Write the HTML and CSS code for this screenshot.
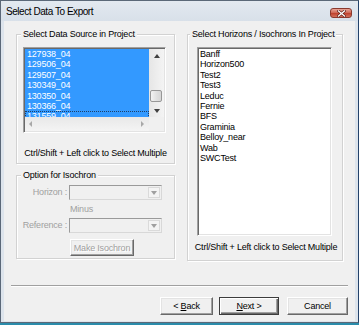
FILE: index.html
```html
<!DOCTYPE html>
<html lang="en">
<head>
<meta charset="UTF-8" />
<title>Select Data To Export</title>
<link rel="stylesheet" href="styles.css">
</head>
<body>
<div class="window">
  <!-- заголовок окна -->
  <div class="titlebar">
    <span class="caption">Select Data To Export</span>
    <span class="close" title="Close">
      <svg width="9" height="7" viewBox="0 0 9 7">
        <path d="M1.5 1 L7.5 6 M7.5 1 L1.5 6" stroke="#5a1d14" stroke-width="2.6" stroke-linecap="square"/>
        <path d="M1.5 1 L7.5 6 M7.5 1 L1.5 6" stroke="#fff" stroke-width="1.4" stroke-linecap="square"/>
      </svg>
    </span>
  </div>

  <div class="client">
    <div class="panes">
      <div class="left-col">
        <!-- источник данных -->
        <div class="group group-source">
          <div class="group-title">Select Data Source in Project</div>
          <div class="listbox listbox-source">
            <div class="items">
              <div class="item sel">127938_04</div>
              <div class="item sel">129506_04</div>
              <div class="item sel">129507_04</div>
              <div class="item sel">130349_04</div>
              <div class="item sel">130350_04</div>
              <div class="item sel">130366_04</div>
              <div class="item sel focus">131559_04</div>
            </div>
            <div class="vscroll">
              <div class="sb-btn sb-up"><span class="tri tri-up"></span></div>
              <div class="sb-track"><div class="thumb"></div></div>
              <div class="sb-btn sb-down"><span class="tri tri-down"></span></div>
            </div>
            <div class="hscroll"><span class="tri tri-left"></span><span class="tri tri-right"></span></div>
            <div class="corner"></div>
          </div>
          <div class="hint hint-source">Ctrl/Shift + Left click to Select Multiple</div>
        </div>

        <!-- изохрона -->
        <div class="group group-iso">
          <div class="group-title">Option for Isochron</div>
          <div class="iso-grid">
            <div class="lbl">Horizon :</div>
            <div class="combo"><span class="drop"><span class="tri tri-down"></span></span></div>
            <div></div>
            <div class="minus">Minus</div>
            <div class="lbl">Reference :</div>
            <div class="combo"><span class="drop"><span class="tri tri-down"></span></span></div>
            <div></div>
            <button class="btn btn-iso" disabled>Make Isochron</button>
          </div>
        </div>
      </div>

      <!-- горизонты -->
      <div class="group group-horizons">
        <div class="group-title">Select Horizons / Isochrons In Project</div>
        <div class="listbox listbox-horizons">
          <div class="item">Banff</div>
          <div class="item">Horizon500</div>
          <div class="item">Test2</div>
          <div class="item">Test3</div>
          <div class="item">Leduc</div>
          <div class="item">Fernie</div>
          <div class="item">BFS</div>
          <div class="item">Graminia</div>
          <div class="item">Belloy_near</div>
          <div class="item">Wab</div>
          <div class="item">SWCTest</div>
        </div>
        <div class="hint hint-horizons">Ctrl/Shift + Left click to Select Multiple</div>
      </div>
    </div>

    <div class="separator"></div>

    <div class="buttons">
      <button class="btn btn-back">&lt; <u>B</u>ack</button>
      <button class="btn btn-next btn-default"><u>N</u>ext &gt;</button>
      <button class="btn btn-cancel">Cancel</button>
    </div>
  </div>
</div>
</body>
</html>
```

FILE: styles.css
```css
/* окно диалога */
html, body {
  margin: 0;
  padding: 0;
}
body {
  width: 359px;
  height: 325px;
  overflow: hidden;
  background: #2a8cab;
  font-family: "Liberation Sans", Arial, sans-serif;
  font-size: 9px;
  letter-spacing: -0.2px;
  color: #000;
}
.window {
  width: 359px;
  height: 323px;
  box-sizing: border-box;
  background: #dde4ec;
  border: 1px solid #5b6878;
  border-right-color: #24436b;
  display: flex;
  flex-direction: column;
}
.titlebar {
  height: 20px;
  flex-shrink: 0;
  display: flex;
  align-items: flex-start;
  padding-left: 5px;
  background: linear-gradient(#e3e9f0, #d8e0e9);
}
.caption {
  font-size: 10px;
  letter-spacing: -0.45px;
  line-height: 10px;
  margin-top: 6px;
}
.close {
  margin-left: auto;
  margin-right: 6px;
  margin-top: 7px;
  width: 22px;
  height: 10px;
  box-sizing: border-box;
  border: 1px solid #8a3a2e;
  border-radius: 3px;
  background: linear-gradient(#e9a598, #d06a58 45%, #c0432f 55%, #d2705c);
  display: flex;
  align-items: center;
  justify-content: center;
}
.close svg { display: block; }

.client {
  flex: 1;
  margin: 0 3px 1px 3px;
  background: #f0f0f0;
  display: flex;
  flex-direction: column;
  padding: 13px 7px 0 7px;
}
.panes {
  display: flex;
  gap: 12px;
  margin: 0 5px;
  align-items: flex-start;
}
.left-col {
  width: 159px;
  display: flex;
  flex-direction: column;
  gap: 11px;
}

/* групповые рамки */
.group {
  box-sizing: border-box;
  border: 1px solid #d2d2d2;
  box-shadow: inset 1px 1px 0 #fff, 1px 1px 0 #fff;
}
.group-title {
  display: table;
  margin: -6px 0 0 -2px;
  padding: 0 2px;
  line-height: 11px;
  background: #f0f0f0;
  white-space: nowrap;
}
.group-source {
  height: 130px;
  padding: 0 7px 0 6px;
}
.group-iso {
  height: 84px;
  padding: 0 11px 0 4px;
}
.group-iso .group-title { margin-left: 0; }
.group-horizons {
  width: 156px;
  height: 227px;
  padding: 0 9px;
}
.group-horizons .group-title { margin-left: -7px; }
.hint {
  line-height: 11px;
  text-align: center;
  white-space: nowrap;
}
.hint-source { margin: 15px -6px 0 -5px; }
.hint-horizons { margin: 6px -8px 0 -6px; }

/* списки */
.listbox {
  box-sizing: border-box;
  border: 1px solid;
  border-color: #a0a0a0 #fff #fff #a0a0a0;
  box-shadow: inset 1px 1px 0 #696969, inset -1px -1px 0 #e3e3e3;
  background: #fff;
  padding: 1px;
  margin-top: 7px;
}
.listbox-source {
  width: 143px;
  height: 86px;
  display: grid;
  grid-template-columns: 1fr 15px;
  grid-template-rows: 1fr 14px;
}
.listbox-horizons {
  width: 135px;
  height: 189px;
  overflow: hidden;
}
.items {
  overflow: hidden;
  min-height: 0;
}
.item {
  height: 10.4px;
  line-height: 10px;
  padding-left: 2px;
  white-space: nowrap;
}
.listbox-horizons .item { padding-left: 1px; }
.item.sel {
  background: #3399ff;
  color: #fff;
}
.item.focus {
  outline: 1px dotted #1d3f66;
  outline-offset: -1px;
}

/* полосы прокрутки */
.vscroll {
  display: flex;
  flex-direction: column;
  background: linear-gradient(90deg, #e6e6e6, #f4f4f4);
}
.sb-btn {
  display: flex;
  align-items: center;
  justify-content: center;
}
.sb-up { height: 13px; }
.sb-down { height: 13px; }
.sb-track { flex: 1; }
.thumb {
  margin: 28px 0 0 1px;
  width: 12px;
  height: 12px;
  box-sizing: border-box;
  border: 1px solid #979797;
  border-radius: 2px;
  background: linear-gradient(90deg, #f3f3f3, #e2e2e2 50%, #d6d6d6);
}
.hscroll {
  display: flex;
  align-items: center;
  justify-content: space-between;
  padding: 0 5px 0 4px;
  background: linear-gradient(#e8e8e8, #f4f4f4);
}
.corner { background: #f0f0f0; }
.tri {
  width: 0;
  height: 0;
  display: block;
}
.tri-up {
  border-left: 3px solid transparent;
  border-right: 3px solid transparent;
  border-bottom: 4px solid #404040;
}
.tri-down {
  border-left: 3px solid transparent;
  border-right: 3px solid transparent;
  border-top: 4px solid #404040;
}
.tri-left {
  border-top: 3px solid transparent;
  border-bottom: 3px solid transparent;
  border-right: 3px solid #a8a8a8;
}
.tri-right {
  border-top: 3px solid transparent;
  border-bottom: 3px solid transparent;
  border-left: 3px solid #a8a8a8;
}

/* опции изохроны */
.iso-grid {
  display: grid;
  grid-template-columns: 46px 93px;
  column-gap: 2px;
  margin-top: 4px;
}
.lbl {
  color: #a0a0a0;
  text-align: right;
  line-height: 15px;
  white-space: nowrap;
}
.minus {
  color: #a0a0a0;
  line-height: 11px;
  margin: 4px 0 3px 1px;
}
.combo {
  height: 15px;
  box-sizing: border-box;
  border: 1px solid;
  border-color: #9a9a9a #d8d8d8 #d8d8d8 #9a9a9a;
  background: #f0f0f0;
  display: flex;
  justify-content: flex-end;
  padding: 1px;
}
.drop {
  width: 12px;
  box-sizing: border-box;
  border: 1px solid #dadada;
  background: #f4f4f4;
  display: flex;
  align-items: center;
  justify-content: center;
}
.drop .tri-down { border-top-color: #a0a0a0; }

/* кнопки */
.btn {
  font: inherit;
  letter-spacing: inherit;
  height: 18px;
  box-sizing: border-box;
  padding: 0;
  background: #f0f0f0;
  color: #000;
  border: 1px solid;
  border-color: #fff #696969 #696969 #fff;
  box-shadow: inset -1px -1px 0 #a0a0a0, inset 1px 1px 0 #e3e3e3;
}
.btn-default {
  border: 1px solid #3c3c3c;
  box-shadow: inset 1px 1px 0 #fff, inset -1px -1px 0 #696969, inset -2px -2px 0 #a0a0a0;
}
.btn-iso {
  width: 64px;
  height: 17px;
  margin: 6px 0 0 1px;
  color: #a0a0a0;
  text-shadow: 1px 1px 0 #fff;
}
.separator {
  margin-top: 24px;
  border-top: 1px solid #a0a0a0;
  border-bottom: 1px solid #fff;
}
.buttons {
  display: flex;
  justify-content: flex-end;
  margin-top: 10px;
}
.btn-back { width: 53px; }
.btn-next { width: 60px; margin-left: 6px; }
.btn-cancel { width: 61px; margin-left: 8px; }
```
